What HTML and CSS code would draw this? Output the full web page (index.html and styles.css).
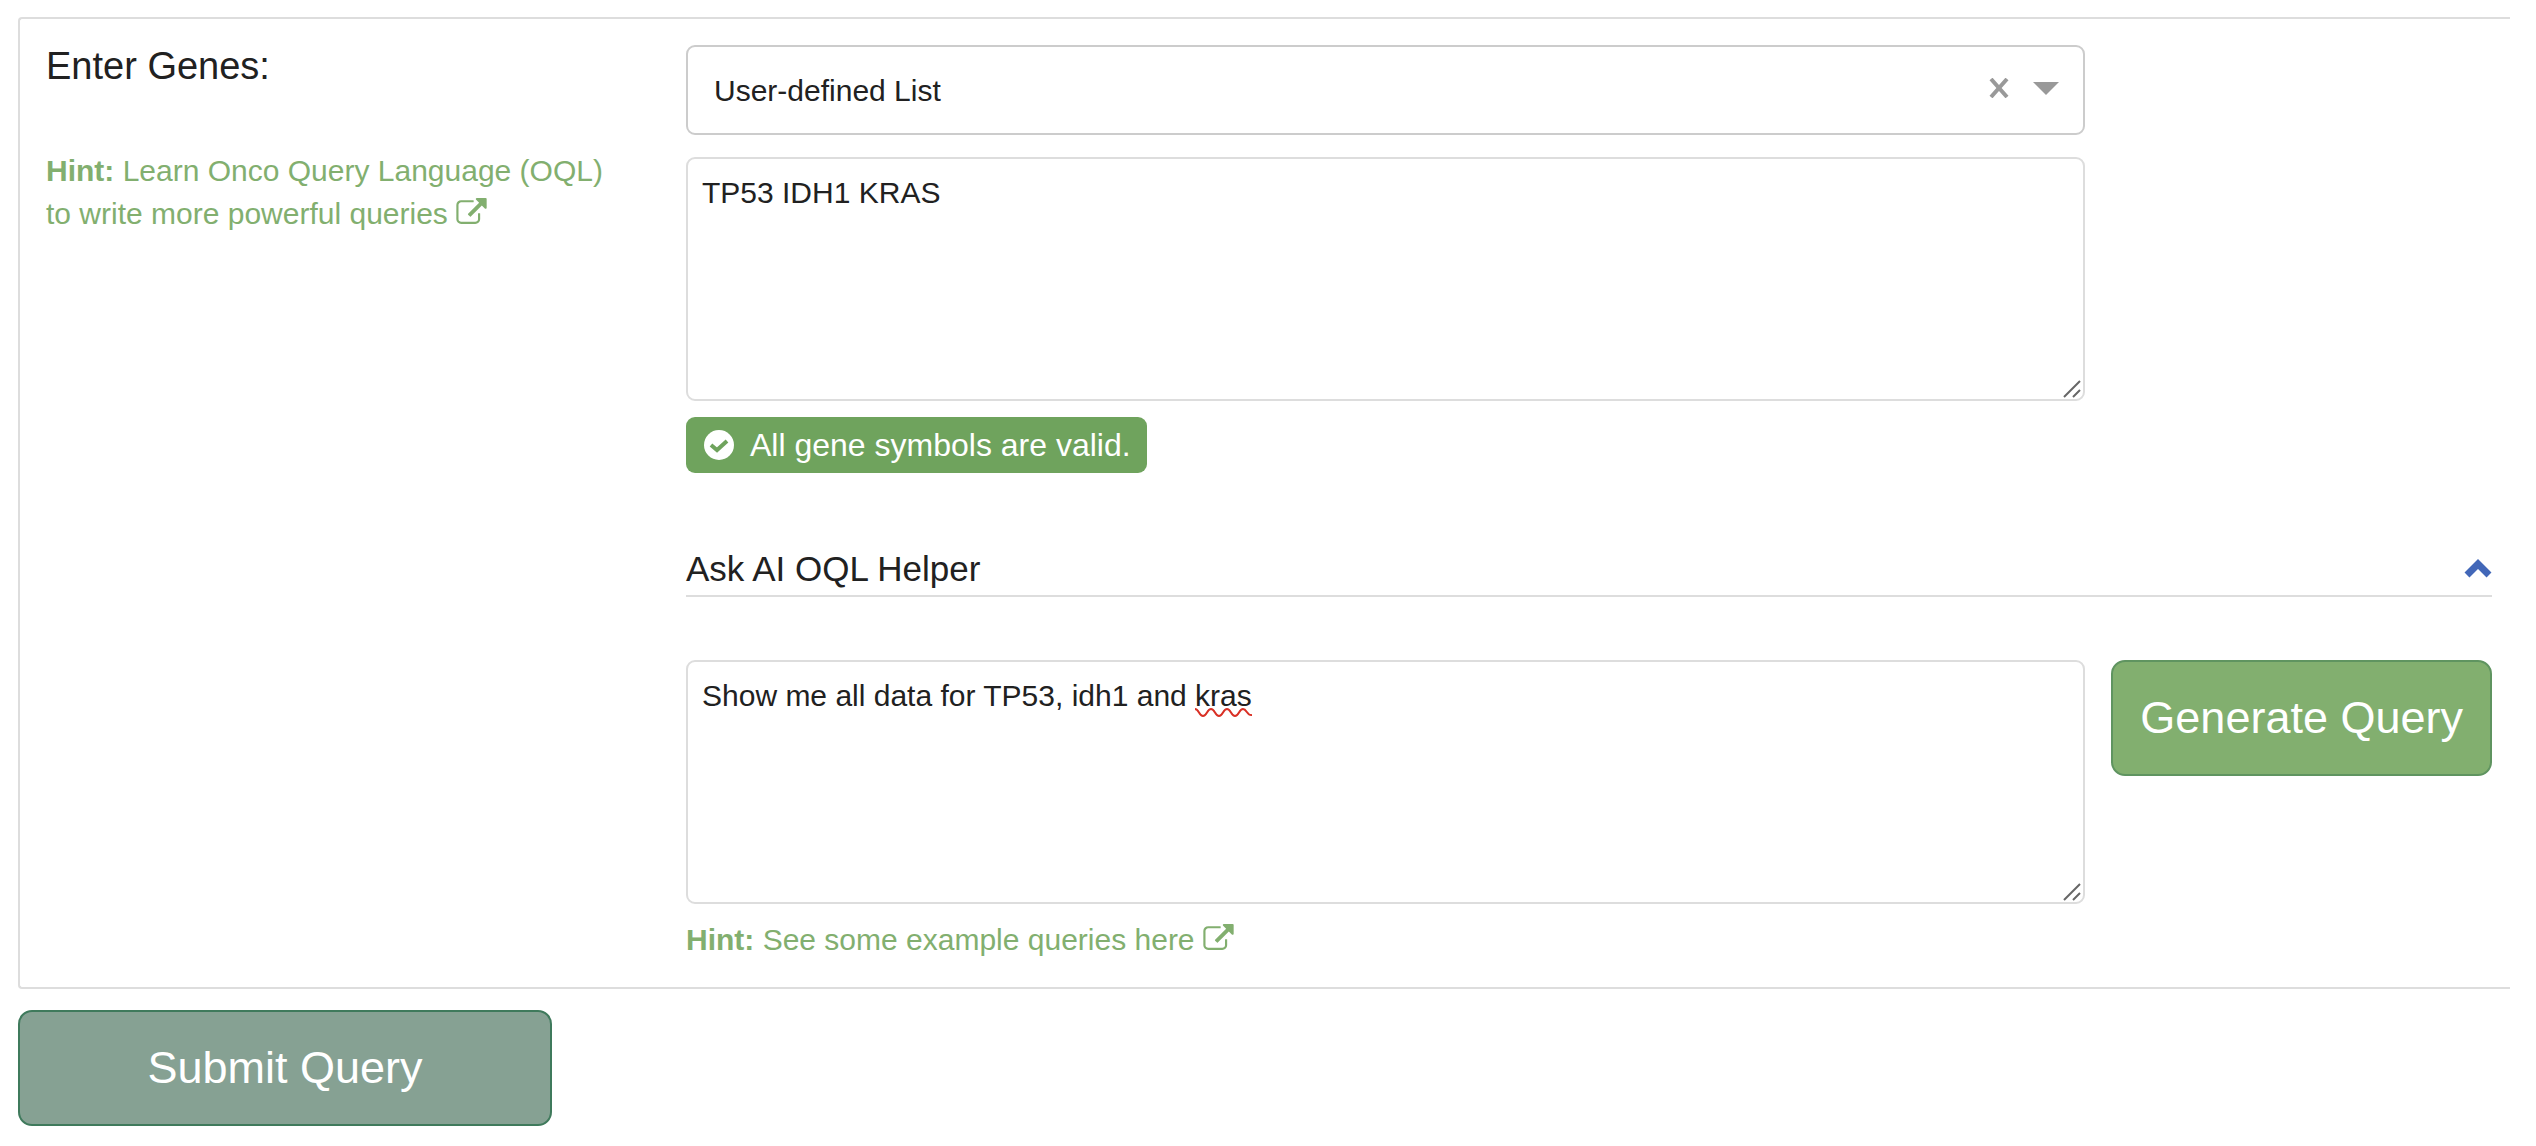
FILE: index.html
```html
<!DOCTYPE html>
<html lang="en">
  <head>
    <meta charset="UTF-8" />
    <meta name="viewport" content="width=device-width, initial-scale=1.0" />
    <title>Query</title>
    <link rel="stylesheet" href="styles.css">
  </head>

  <body>
    <svg width="0" height="0" class="defs" aria-hidden="true">
      <symbol id="external-link" viewBox="0 0 1792 1536">
        <path d="M1408 928v320q0 119-84.5 203.5t-203.5 84.5h-832q-119 0-203.5-84.5t-84.5-203.5v-832q0-119 84.5-203.5t203.5-84.5h704q14 0 23 9t9 23v64q0 14-9 23t-23 9h-704q-66 0-113 47t-47 113v832q0 66 47 113t113 47h832q66 0 113-47t47-113v-320q0-14 9-23t23-9h64q14 0 23 9t9 23zm384-864v512q0 26-19 45t-45 19-45-19l-176-176-652 652q-10 10-23 10t-23-10l-114-114q-10-10-10-23t10-23l652-652-176-176q-19-19-19-45t19-45 45-19h512q26 0 45 19t19 45z" />
      </symbol>
      <symbol id="grip" viewBox="0 0 18 18">
        <path d="M1 17L17 1M10 17L17 10" />
      </symbol>
    </svg>

    <form id="query-form">
      <div class="panel">
        <div class="side">
          <label for="genes" class="title">Enter Genes:</label>
          <a href="#" class="hint"><strong>Hint:</strong> Learn Onco Query Language (OQL)<br />to write more powerful queries <svg class="link-icon"><use href="#external-link" /></svg></a>
        </div>

        <div class="fields">
          <div class="select-box">
            <select name="gene_list" aria-label="Gene list">
              <option selected>User-defined List</option>
            </select>
            <div class="select-icons">
              <button type="button" class="clear" aria-label="Clear">
                <svg width="20" height="20" viewBox="0 0 20 20"><path d="M2 1L18 19M18 1L2 19" /></svg>
              </button>
              <svg class="arrow" width="26" height="13" viewBox="0 0 26 13"><path d="M0 0H26L13 13Z" /></svg>
            </div>
          </div>

          <div class="text-box">
            <textarea id="genes" name="genes" spellcheck="false">TP53 IDH1 KRAS</textarea>
            <svg class="grip"><use href="#grip" /></svg>
          </div>

          <div class="valid">
            <svg width="30" height="30" viewBox="0 0 30 30">
              <circle cx="15" cy="15" r="15" fill="#fff" />
              <path d="M7 15L13 20L23 11" fill="none" stroke="#6fa35d" stroke-width="4" />
            </svg>
            <span>All gene symbols are valid.</span>
          </div>

          <div class="helper-header">
            <label for="question">Ask AI OQL Helper</label>
            <button type="button" class="collapse" aria-label="Collapse">
              <svg width="28" height="20" viewBox="0 0 28 20"><path d="M3 16L14 5L25 16" /></svg>
            </button>
          </div>

          <div class="text-box">
            <textarea id="question" name="question" spellcheck="false">Show me all data for TP53, idh1 and kras</textarea>
            <svg class="squiggle" width="57" height="11" viewBox="0 0 57 11">
              <path d="M0 2C4 2 4 9 8 9S12 2 16 2S20 9 24 9S28 2 32 2S36 9 40 9S44 2 48 2S52 9 57 8" />
            </svg>
            <svg class="grip"><use href="#grip" /></svg>
          </div>
          <button type="button" class="button generate">Generate Query</button>

          <a href="#" class="hint example"><strong>Hint:</strong> See some example queries here <svg class="link-icon"><use href="#external-link" /></svg></a>
        </div>
      </div>

      <button type="submit" class="button submit">Submit Query</button>
    </form>
  </body>
</html>
```

FILE: styles.css
```css
* {
  box-sizing: border-box;
}

body {
  margin: 17px 26px 18px 18px;
  font-family: "Liberation Sans", Arial, sans-serif;
  font-size: 30px;
  line-height: 43px;
  color: #212121;
  background-color: #fff;
}

.defs {
  position: absolute;
}

.panel {
  display: grid;
  grid-template-columns: 640px 1fr;
  padding: 26px 18px 26px 26px;
  border: 2px solid #ddd;
  border-right: none;
  border-radius: 4px 0 0 4px;
}

.title {
  display: block;
  margin-bottom: 61px;
  font-size: 38px;
}

.hint {
  color: #82af6f;
  text-decoration: none;
}

.link-icon {
  width: 31px;
  height: 26px;
  fill: #82af6f;
}

.fields {
  display: grid;
  grid-template-columns: 1fr auto;
  column-gap: 26px;
}

.select-box,
.text-box {
  grid-column: 1;
  position: relative;
}

.select-box {
  margin-bottom: 22px;
}

select {
  display: block;
  width: 100%;
  height: 90px;
  padding: 0 120px 0 26px;
  appearance: none;
  border: 2px solid #ccc;
  border-radius: 9px;
  background-color: #fff;
  color: #212121;
  font-family: inherit;
  font-size: 30px;
}

.select-icons {
  position: absolute;
  top: 0;
  right: 26px;
  height: 86px;
  display: flex;
  align-items: center;
  gap: 24px;
  pointer-events: none;
}

.clear,
.collapse {
  display: flex;
  padding: 0;
  border: none;
  background: none;
  cursor: pointer;
  pointer-events: auto;
}

.clear path {
  stroke: #999;
  stroke-width: 4;
}

.arrow {
  fill: #999;
}

textarea {
  display: block;
  width: 100%;
  height: 244px;
  padding: 12px 14px;
  border: 2px solid #ddd;
  border-radius: 9px;
  resize: none;
  background-color: #fff;
  color: #212121;
  font-family: inherit;
  font-size: 30px;
  line-height: 43px;
}

.grip {
  position: absolute;
  right: 4px;
  bottom: 3px;
  width: 18px;
  height: 18px;
  stroke: #666;
  stroke-width: 2;
  pointer-events: none;
}

/* spelling mark under the last word */
.squiggle {
  position: absolute;
  top: 47px;
  left: 509px;
  fill: none;
  stroke: #d93025;
  stroke-width: 2;
  pointer-events: none;
}

.valid {
  grid-column: 1;
  justify-self: start;
  display: flex;
  align-items: center;
  gap: 16px;
  height: 56px;
  margin-top: 16px;
  padding: 0 16px 0 18px;
  border-radius: 9px;
  background-color: #6fa35d;
  color: #fff;
  font-size: 32px;
}

.helper-header {
  grid-column: 1 / -1;
  display: flex;
  justify-content: space-between;
  align-items: center;
  margin: 70px 0 63px;
  border-bottom: 2px solid #ddd;
  font-size: 35px;
  line-height: 52px;
}

.collapse path {
  fill: none;
  stroke: #4267b8;
  stroke-width: 7;
}

.button {
  height: 116px;
  padding: 0 27px;
  border-radius: 14px;
  color: #fff;
  font-family: inherit;
  font-size: 45px;
  cursor: pointer;
}

.generate {
  border: 2px solid #5f9460;
  background-color: #82af6f;
}

.example {
  grid-column: 1;
  margin-top: 14px;
}

.submit {
  width: 534px;
  margin-top: 21px;
  border: 2px solid #3f7a5c;
  background-color: #86a193;
}
```
